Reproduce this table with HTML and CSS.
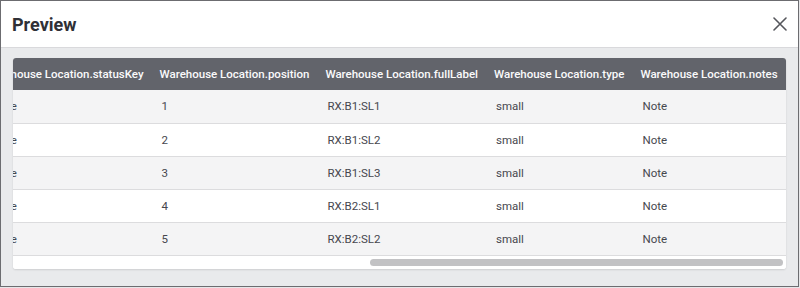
FILE: index.html
```html
<!DOCTYPE html>
<html lang="en">
<head>
<meta charset="utf-8">
<title>Preview</title>
<link rel="stylesheet" href="styles.css">
</head>
<body>
<div class="dialog">
  <header class="dialog-header">
    <h2 class="dialog-title">Preview</h2>
    <button class="close-btn" aria-label="Close">
      <svg width="14" height="14" viewBox="0 0 14 14"><path d="M1 1L13 13M13 1L1 13" stroke="#55565c" stroke-width="1.6" stroke-linecap="round" fill="none"/></svg>
    </button>
  </header>
  <div class="dialog-body">
    <div class="table-card">
      <div class="scroller" id="scroller">
        <table class="grid">
          <thead>
            <tr>
              <th>Warehouse Location.id</th>
              <th>Warehouse Location.name</th>
              <th>Warehouse Location.description</th>
              <th>Warehouse Location.status</th>
              <th>Warehouse Location.statusKey</th>
              <th>Warehouse Location.position</th>
              <th>Warehouse Location.fullLabel</th>
              <th>Warehouse Location.type</th>
              <th>Warehouse Location.notes</th>
            </tr>
          </thead>
          <tbody>
            <tr><td>101</td><td>Shelf Level 1</td><td>Rack X, Bay 1</td><td>Active</td><td>active</td><td>1</td><td>RX:B1:SL1</td><td>small</td><td>Note</td></tr>
            <tr><td>102</td><td>Shelf Level 2</td><td>Rack X, Bay 1</td><td>Active</td><td>active</td><td>2</td><td>RX:B1:SL2</td><td>small</td><td>Note</td></tr>
            <tr><td>103</td><td>Shelf Level 3</td><td>Rack X, Bay 1</td><td>Active</td><td>active</td><td>3</td><td>RX:B1:SL3</td><td>small</td><td>Note</td></tr>
            <tr><td>104</td><td>Shelf Level 1</td><td>Rack X, Bay 2</td><td>Active</td><td>active</td><td>4</td><td>RX:B2:SL1</td><td>small</td><td>Note</td></tr>
            <tr><td>105</td><td>Shelf Level 2</td><td>Rack X, Bay 2</td><td>Active</td><td>active</td><td>5</td><td>RX:B2:SL2</td><td>small</td><td>Note</td></tr>
          </tbody>
        </table>
      </div>
      <div class="hscroll" id="hscroll">
        <div class="hscroll-thumb" id="thumb"></div>
      </div>
    </div>
  </div>
</div>
<script src="app.js"></script>
</body>
</html>
```
FILE: styles.css
```css
* { box-sizing: border-box; }

html, body {
  margin: 0;
  padding: 0;
  background: #e6e6e8;
  font-family: Roboto, "Liberation Sans", Arial, sans-serif;
}

.dialog {
  width: 799px;
  height: 287px;
  border: 1px solid #6c6c70;
  background: #e9eaec;
  display: flex;
  flex-direction: column;
}

.dialog-header {
  height: 47px;
  flex: none;
  background: #fff;
  border-bottom: 1px solid #d9d9dc;
  display: flex;
  align-items: center;
  justify-content: space-between;
  padding: 0 11px 0 11px;
}

.dialog-title {
  margin: 0;
  font-size: 18px;
  font-weight: 700;
  color: #2f3036;
}

.close-btn {
  border: 0;
  background: none;
  padding: 0;
  width: 14px;
  height: 14px;
  display: flex;
  cursor: pointer;
}

.dialog-body {
  flex: 1;
  padding: 10px 12px 0 12px;
}

.table-card {
  background: #fff;
  border-radius: 3px;
  overflow: hidden;
  box-shadow: 0 1px 2px rgba(0, 0, 0, 0.12);
}

.scroller {
  overflow: hidden;
}

/* custom horizontal scrollbar, driven by app.js */
.hscroll {
  height: 13px;
  padding: 3px 3px 3px 0;
  background: #fff;
  display: flex;
}

.hscroll-thumb {
  height: 7px;
  background: #c2c2c4;
  border-radius: 4px;
}

.grid {
  border-collapse: collapse;
  white-space: nowrap;
  font-size: 11.5px;
}

.grid th {
  background: #62646b;
  color: #fafafb;
  font-weight: 500;
  text-align: left;
  height: 32px;
  padding: 0 8px;
}

.grid td {
  height: 33px;
  padding: 0 8px 0 10px;
  color: #46474e;
  border-bottom: 1px solid #dcdcde;
}

.grid tbody tr:nth-child(odd) td { background: #f4f4f5; }
.grid tbody tr:nth-child(even) td { background: #fff; }
```
FILE: app.js
```js
// Start the preview grid scrolled to its last columns and size the thumb.
var scroller = document.getElementById('scroller');
var track = document.getElementById('hscroll');
var thumb = document.getElementById('thumb');

scroller.scrollLeft = scroller.scrollWidth;

var trackWidth = track.clientWidth;
var ratio = scroller.clientWidth / scroller.scrollWidth;
var offset = scroller.scrollLeft / scroller.scrollWidth;
thumb.style.width = Math.round(trackWidth * ratio) + 'px';
thumb.style.marginLeft = Math.round(trackWidth * offset) + 'px';
```
